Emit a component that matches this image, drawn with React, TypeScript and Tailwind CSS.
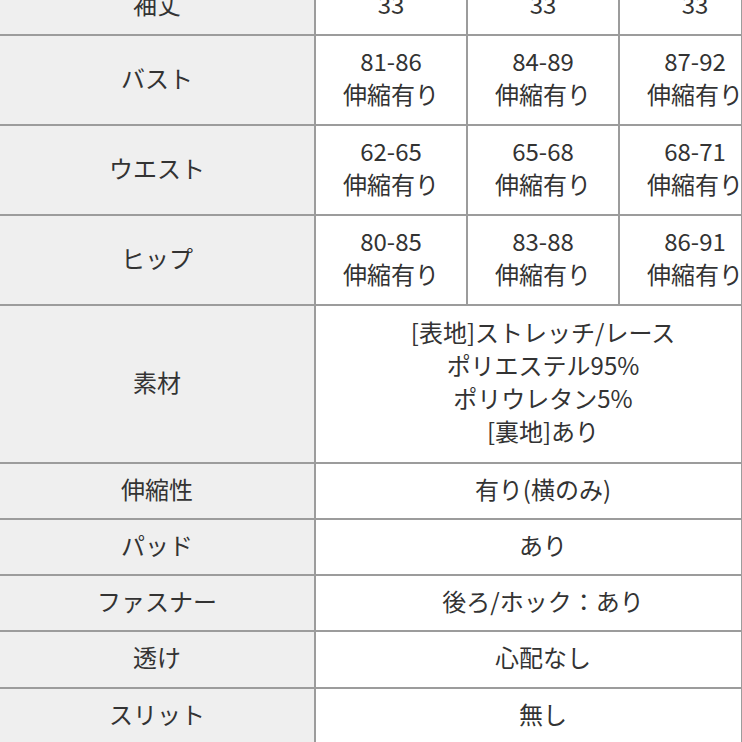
const sizeRows = [
  { label: "バスト", values: ["81-86", "84-89", "87-92"] },
  { label: "ウエスト", values: ["62-65", "65-68", "68-71"] },
  { label: "ヒップ", values: ["80-85", "83-88", "86-91"] },
];

const infoRows = [
  { label: "伸縮性", value: "有り(横のみ)", h: "h-[54px]" },
  { label: "パッド", value: "あり", h: "h-[54px]" },
  { label: "ファスナー", value: "後ろ/ホック：あり", h: "h-[54px]" },
  { label: "透け", value: "心配なし", h: "h-[55px]" },
  { label: "スリット", value: "無し", h: "h-[54px]" },
];

const labelCell = "flex items-center justify-center pb-[6px] bg-[#efefef]";
const valueCell = "flex flex-col items-center justify-center pb-[6px] bg-white";

export default function App() {
  return (
    <div className="w-[742px] h-[742px] overflow-hidden bg-white border-r border-[#9c9c9c]">
      <div className="-mt-[21px] w-[770px] grid grid-cols-[314px_150px_150px_150px] gap-[2px] bg-[#9c9c9c] font-['Noto_Sans_CJK_JP','Noto_Sans',sans-serif] text-[24px] leading-[33px] text-[#333]">
        <div className={`${labelCell} h-[55px]`}>袖丈</div>
        <div className={valueCell}>33</div>
        <div className={valueCell}>33</div>
        <div className={valueCell}>33</div>

        {sizeRows.map((row) => (
          <>
            <div key={row.label} className={`${labelCell} h-[88px]`}>
              {row.label}
            </div>
            {row.values.map((v) => (
              <div key={row.label + v} className={`${valueCell} whitespace-nowrap`}>
                <span>{v}</span>
                <span>伸縮有り</span>
              </div>
            ))}
          </>
        ))}

        <div className={`${labelCell} h-[156px]`}>素材</div>
        <div className={`${valueCell} col-span-3`}>
          <span>[表地]ストレッチ/レース</span>
          <span>ポリエステル95%</span>
          <span>ポリウレタン5%</span>
          <span>[裏地]あり</span>
        </div>

        {infoRows.map((row) => (
          <>
            <div key={row.label} className={`${labelCell} ${row.h}`}>
              {row.label}
            </div>
            <div key={row.label + "-v"} className={`${valueCell} col-span-3`}>
              {row.value}
            </div>
          </>
        ))}
      </div>
    </div>
  );
}
